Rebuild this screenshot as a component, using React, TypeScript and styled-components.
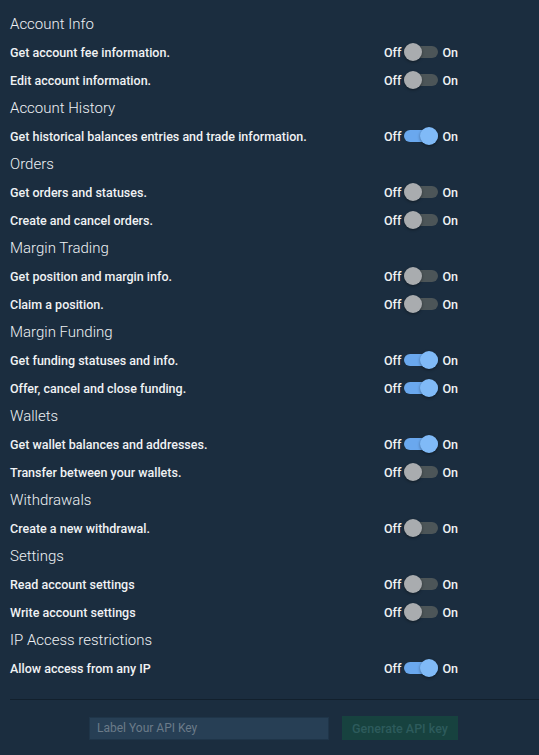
import React, { useState } from 'react';
import styled, { createGlobalStyle } from 'styled-components';

const GlobalStyle = createGlobalStyle`
  html, body {
    margin: 0;
    padding: 0;
    background: #1b2d3f;
  }
  * {
    box-sizing: border-box;
  }
`;

const Page = styled.div`
  background: #1b2d3f;
  min-height: 755px;
  font-family: Roboto, 'Liberation Sans', sans-serif;
  color: #ffffff;
  padding: 10px 0 0 10px;
`;

const Section = styled.div`
  display: flex;
  flex-direction: column;
`;

const Heading = styled.h3`
  margin: 0;
  height: 28px;
  line-height: 28px;
  font-size: 15px;
  font-weight: 300;
  color: #eef1f4;
`;

const Row = styled.div`
  display: flex;
  align-items: center;
  height: 28px;
  padding-right: 81px;
`;

const Label = styled.span`
  flex: 1;
  font-size: 12.5px;
  font-weight: 500;
  color: #f0f2f4;
`;

const SwitchWrap = styled.label`
  display: flex;
  align-items: center;
  gap: 3px;
  font-size: 12.5px;
  font-weight: 500;
  color: #f0f2f4;
  cursor: pointer;
  user-select: none;
`;

const Track = styled.span<{ $on: boolean }>`
  position: relative;
  width: 34px;
  height: 12px;
  margin-right: 1px;
  border-radius: 6px;
  background: ${(p) => (p.$on ? '#6aa8ee' : '#4c5558')};
`;

const Thumb = styled.span<{ $on: boolean }>`
  position: absolute;
  top: -3px;
  left: ${(p) => (p.$on ? '16px' : '0')};
  width: 18px;
  height: 18px;
  border-radius: 50%;
  background: ${(p) => (p.$on ? '#80baf7' : '#a9acaf')};
  box-shadow: 0 1px 3px rgba(0, 0, 0, 0.4);
  transition: left 0.15s;
`;

const Divider = styled.hr`
  margin: 17px 0 0 0;
  border: none;
  border-top: 1px solid #12202d;
`;

const Footer = styled.div`
  display: flex;
  align-items: center;
  gap: 13px;
  padding: 16px 0 0 79px;
`;

const KeyInput = styled.input`
  width: 240px;
  height: 23px;
  background: #273f55;
  border: 1px solid #1f3549;
  color: #ffffff;
  font-family: Roboto, 'Liberation Sans', sans-serif;
  font-size: 12px;
  padding: 0 7px;
  outline: none;
  &::placeholder {
    color: #6b7b89;
  }
`;

const GenerateButton = styled.button`
  width: 116px;
  height: 24px;
  background: #17423f;
  border: none;
  color: #2d5b5c;
  font-family: Roboto, 'Liberation Sans', sans-serif;
  font-size: 12.5px;
  font-weight: 500;
`;

interface Permission {
  label: string;
  on: boolean;
}

interface Group {
  title: string;
  items: Permission[];
}

const groups: Group[] = [
  {
    title: 'Account Info',
    items: [
      { label: 'Get account fee information.', on: false },
      { label: 'Edit account information.', on: false },
    ],
  },
  {
    title: 'Account History',
    items: [{ label: 'Get historical balances entries and trade information.', on: true }],
  },
  {
    title: 'Orders',
    items: [
      { label: 'Get orders and statuses.', on: false },
      { label: 'Create and cancel orders.', on: false },
    ],
  },
  {
    title: 'Margin Trading',
    items: [
      { label: 'Get position and margin info.', on: false },
      { label: 'Claim a position.', on: false },
    ],
  },
  {
    title: 'Margin Funding',
    items: [
      { label: 'Get funding statuses and info.', on: true },
      { label: 'Offer, cancel and close funding.', on: true },
    ],
  },
  {
    title: 'Wallets',
    items: [
      { label: 'Get wallet balances and addresses.', on: true },
      { label: 'Transfer between your wallets.', on: false },
    ],
  },
  {
    title: 'Withdrawals',
    items: [{ label: 'Create a new withdrawal.', on: false }],
  },
  {
    title: 'Settings',
    items: [
      { label: 'Read account settings', on: false },
      { label: 'Write account settings', on: false },
    ],
  },
  {
    title: 'IP Access restrictions',
    items: [{ label: 'Allow access from any IP', on: true }],
  },
];

const Toggle = ({ on, onChange }: { on: boolean; onChange: () => void }) => (
  <SwitchWrap onClick={onChange}>
    Off
    <Track $on={on}>
      <Thumb $on={on} />
    </Track>
    On
  </SwitchWrap>
);

const App = () => {
  const [state, setState] = useState(groups);

  const flip = (gi: number, ii: number) => {
    setState((prev) =>
      prev.map((g, i) =>
        i !== gi
          ? g
          : { ...g, items: g.items.map((it, j) => (j === ii ? { ...it, on: !it.on } : it)) }
      )
    );
  };

  return (
    <Page>
      <GlobalStyle />
      {state.map((group, gi) => (
        <Section key={group.title}>
          <Heading>{group.title}</Heading>
          {group.items.map((item, ii) => (
            <Row key={item.label}>
              <Label>{item.label}</Label>
              <Toggle on={item.on} onChange={() => flip(gi, ii)} />
            </Row>
          ))}
        </Section>
      ))}
      <Divider />
      <Footer>
        <KeyInput placeholder="Label Your API Key" />
        <GenerateButton disabled>Generate API key</GenerateButton>
      </Footer>
    </Page>
  );
};

export default App;
